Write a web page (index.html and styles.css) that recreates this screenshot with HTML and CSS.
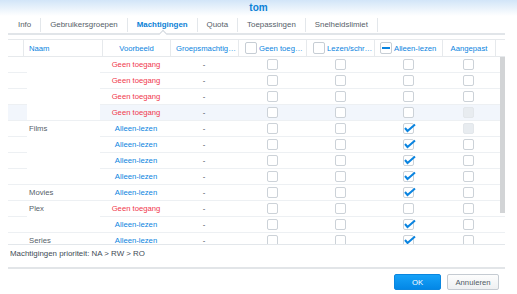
FILE: index.html
```html
<!DOCTYPE html>
<html lang="nl">
<head>
<meta charset="utf-8">
<title>tom</title>
<link rel="stylesheet" href="styles.css">
</head>
<body>
<div class="dialog">
  <div class="titlebar">tom</div>
  <div class="content">
    <div class="tabs">
      <div class="tab"><span class="tab-label">Info</span></div>
      <div class="tab"><span class="tab-label">Gebruikersgroepen</span></div>
      <div class="tab active"><span class="tab-label">Machtigingen</span><span class="notch"></span></div>
      <div class="tab"><span class="tab-label">Quota</span></div>
      <div class="tab"><span class="tab-label">Toepassingen</span></div>
      <div class="tab"><span class="tab-label">Snelheidslimiet</span></div>
    </div>

    <div class="ghead">
      <div class="h"></div>
      <div class="h left">Naam</div>
      <div class="h center">Voorbeeld</div>
      <div class="h left">Groepsmachtig…</div>
      <div class="h left"><span class="hcb"></span>Geen toeg…</div>
      <div class="h left"><span class="hcb"></span>Lezen/schr…</div>
      <div class="h left tight"><span class="hcb mixed"></span>Alleen-lezen</div>
      <div class="h center">Aangepast</div>
      <div class="h"></div>
    </div>

    <div class="gbody">
      <div class="rows">
        <!-- row 1 -->
        <div class="c"></div>
        <div class="c name span4"></div>
        <div class="c red">Geen toegang</div>
        <div class="c dash">-</div>
        <div class="c"><span class="cb"></span></div>
        <div class="c"><span class="cb"></span></div>
        <div class="c"><span class="cb"></span></div>
        <div class="c"><span class="cb"></span></div>
        <div class="c"></div>
        <!-- row 2 -->
        <div class="c"></div>
        <div class="c red">Geen toegang</div>
        <div class="c dash">-</div>
        <div class="c"><span class="cb"></span></div>
        <div class="c"><span class="cb"></span></div>
        <div class="c"><span class="cb"></span></div>
        <div class="c"><span class="cb"></span></div>
        <div class="c"></div>
        <!-- row 3 -->
        <div class="c"></div>
        <div class="c red">Geen toegang</div>
        <div class="c dash">-</div>
        <div class="c"><span class="cb"></span></div>
        <div class="c"><span class="cb"></span></div>
        <div class="c"><span class="cb"></span></div>
        <div class="c"><span class="cb"></span></div>
        <div class="c"></div>
        <!-- row 4 (hover) -->
        <div class="c hl"></div>
        <div class="c hl red">Geen toegang</div>
        <div class="c hl dash">-</div>
        <div class="c hl"><span class="cb"></span></div>
        <div class="c hl"><span class="cb"></span></div>
        <div class="c hl"><span class="cb"></span></div>
        <div class="c hl"><span class="cb dis"></span></div>
        <div class="c hl"></div>
        <!-- row 5 Films -->
        <div class="c"></div>
        <div class="c name span4">Films</div>
        <div class="c blue">Alleen-lezen</div>
        <div class="c dash">-</div>
        <div class="c"><span class="cb"></span></div>
        <div class="c"><span class="cb"></span></div>
        <div class="c"><span class="cb"><svg class="tick" width="9" height="9"><path d="M1 4 L3.5 7 L11 0.5"/></svg></span></div>
        <div class="c"><span class="cb dis"></span></div>
        <div class="c"></div>
        <!-- row 6 -->
        <div class="c"></div>
        <div class="c blue">Alleen-lezen</div>
        <div class="c dash">-</div>
        <div class="c"><span class="cb"></span></div>
        <div class="c"><span class="cb"></span></div>
        <div class="c"><span class="cb"><svg class="tick" width="9" height="9"><path d="M1 4 L3.5 7 L11 0.5"/></svg></span></div>
        <div class="c"><span class="cb"></span></div>
        <div class="c"></div>
        <!-- row 7 -->
        <div class="c"></div>
        <div class="c blue">Alleen-lezen</div>
        <div class="c dash">-</div>
        <div class="c"><span class="cb"></span></div>
        <div class="c"><span class="cb"></span></div>
        <div class="c"><span class="cb"><svg class="tick" width="9" height="9"><path d="M1 4 L3.5 7 L11 0.5"/></svg></span></div>
        <div class="c"><span class="cb"></span></div>
        <div class="c"></div>
        <!-- row 8 -->
        <div class="c"></div>
        <div class="c blue">Alleen-lezen</div>
        <div class="c dash">-</div>
        <div class="c"><span class="cb"></span></div>
        <div class="c"><span class="cb"></span></div>
        <div class="c"><span class="cb"><svg class="tick" width="9" height="9"><path d="M1 4 L3.5 7 L11 0.5"/></svg></span></div>
        <div class="c"><span class="cb"></span></div>
        <div class="c"></div>
        <!-- row 9 Movies -->
        <div class="c"></div>
        <div class="c name">Movies</div>
        <div class="c blue">Alleen-lezen</div>
        <div class="c dash">-</div>
        <div class="c"><span class="cb"></span></div>
        <div class="c"><span class="cb"></span></div>
        <div class="c"><span class="cb"><svg class="tick" width="9" height="9"><path d="M1 4 L3.5 7 L11 0.5"/></svg></span></div>
        <div class="c"><span class="cb"></span></div>
        <div class="c"></div>
        <!-- row 10 Plex -->
        <div class="c"></div>
        <div class="c name span2">Plex</div>
        <div class="c red">Geen toegang</div>
        <div class="c dash">-</div>
        <div class="c"><span class="cb"></span></div>
        <div class="c"><span class="cb"></span></div>
        <div class="c"><span class="cb"></span></div>
        <div class="c"><span class="cb"></span></div>
        <div class="c"></div>
        <!-- row 11 -->
        <div class="c"></div>
        <div class="c blue">Alleen-lezen</div>
        <div class="c dash">-</div>
        <div class="c"><span class="cb"></span></div>
        <div class="c"><span class="cb"></span></div>
        <div class="c"><span class="cb"><svg class="tick" width="9" height="9"><path d="M1 4 L3.5 7 L11 0.5"/></svg></span></div>
        <div class="c"><span class="cb"></span></div>
        <div class="c"></div>
        <!-- row 12 Series -->
        <div class="c"></div>
        <div class="c name">Series</div>
        <div class="c blue">Alleen-lezen</div>
        <div class="c dash">-</div>
        <div class="c"><span class="cb"></span></div>
        <div class="c"><span class="cb"></span></div>
        <div class="c"><span class="cb"><svg class="tick" width="9" height="9"><path d="M1 4 L3.5 7 L11 0.5"/></svg></span></div>
        <div class="c"><span class="cb"></span></div>
        <div class="c"></div>
      </div>
      <div class="thumb"></div>
    </div>

    <div class="note">Machtigingen prioriteit: NA &gt; RW &gt; RO</div>
    <div class="sep"></div>
    <div class="actions">
      <button class="btn ok">OK</button>
      <button class="btn cancel">Annuleren</button>
    </div>
  </div>
</div>
</body>
</html>
```

FILE: styles.css
```css
html, body {
  margin: 0;
  padding: 0;
  background: #ffffff;
}

body {
  font-family: "Liberation Sans", Arial, sans-serif;
  font-size: 7.7px;
  color: #414b55;
}

.dialog {
  width: 517px;
  height: 294px;
  overflow: hidden;
}

.titlebar {
  height: 16px;
  line-height: 16px;
  text-align: center;
  font-weight: bold;
  font-size: 10px;
  color: #0a7fd6;
  background: linear-gradient(#d2e5f8, #ffffff);
}

.content {
  padding: 0 12px 0 8px;
}

/* Tabs */
.tabs {
  display: flex;
  height: 17px;
  padding-left: 1px;
  border-bottom: 2px solid #e1e5e9;
  font-size: 7.9px;
}

.tab {
  position: relative;
  padding: 2px 0 1px;
  color: #555e68;
}

.tab-label {
  display: block;
  height: 14px;
  line-height: 14px;
  padding: 0 9px;
  border-right: 1px solid #e3e7eb;
}

.tab.active {
  color: #0a7fd6;
  font-weight: bold;
}

.notch {
  position: absolute;
  left: calc(50% - 3px);
  bottom: -4px;
  width: 5px;
  height: 5px;
  background: #ffffff;
  border-top: 1px solid #d3d9df;
  border-left: 1px solid #d3d9df;
  transform: rotate(45deg);
}

/* Grid header */
.ghead {
  margin-top: 4px;
  display: grid;
  grid-template-columns: 15px 79px 68px 68px 68px 68px 68px 53px 10px;
  height: 16px;
  border-top: 1px solid #e6e9ec;
  border-bottom: 1px solid #e6e9ec;
}

.h {
  display: flex;
  align-items: center;
  white-space: nowrap;
  overflow: hidden;
  color: #0a84e0;
  border-left: 1px solid #e6e9ec;
}

.h:first-child {
  border-left: none;
}

.h.left {
  padding-left: 5px;
}

.h.center {
  justify-content: center;
}

.h.tight {
  padding-left: 4px;
}

.hcb {
  position: relative;
  display: inline-block;
  box-sizing: border-box;
  width: 12px;
  height: 12px;
  margin-left: 1px;
  margin-right: 2px;
  border: 1px solid #c6cdd4;
  border-radius: 2px;
  background: #ffffff;
  flex: none;
}

.hcb.mixed::after {
  content: "";
  position: absolute;
  left: 1px;
  top: 4px;
  width: 8px;
  height: 2px;
  background: #0a84e0;
}

/* Grid body */
.gbody {
  position: relative;
  height: 187px;
  overflow: hidden;
  border-bottom: 1px solid #e3e7eb;
}

.rows {
  display: grid;
  grid-template-columns: 19px 73px 70px 68px 68px 68px 68px 53px 10px;
  grid-auto-rows: 16px;
}

.c {
  display: flex;
  align-items: center;
  justify-content: center;
  border-bottom: 1px solid #edf0f3;
  white-space: nowrap;
}

.c.hl {
  background: #f2f6fc;
}

.c.name {
  justify-content: flex-start;
  align-items: flex-start;
  line-height: 15px;
  padding-left: 2px;
  color: #555e68;
}

.span4 { grid-row: span 4; }
.span2 { grid-row: span 2; }

.red {
  color: #f0384c;
  padding-left: 2px;
}

.blue {
  color: #0a84e0;
  padding-left: 2px;
}

.dash {
  color: #414b55;
}

.cb {
  position: relative;
  display: block;
  box-sizing: border-box;
  width: 11px;
  height: 11px;
  border: 1px solid #ccd2d8;
  border-radius: 2px;
  background: #ffffff;
}

.cb.dis {
  background: #e8ecf0;
  border-color: #e3e7eb;
}

.tick {
  position: absolute;
  left: 0;
  top: 0;
  overflow: visible;
}

.tick path {
  fill: none;
  stroke: #0a84e0;
  stroke-width: 2;
}

.thumb {
  position: absolute;
  right: 0;
  top: 0;
  width: 5px;
  height: 156px;
  background: #d2d4d6;
}

/* Footer */
.note {
  height: 17px;
  line-height: 17px;
  padding-left: 2px;
  color: #414b55;
  font-size: 7.9px;
}

.sep {
  margin-top: 5px;
  border-top: 2px solid #e2e5e8;
}

.actions {
  display: flex;
  justify-content: flex-end;
  gap: 6px;
  padding-top: 5px;
  padding-right: 6px;
}

.btn {
  box-sizing: border-box;
  height: 16px;
  padding: 0;
  border-radius: 2px;
  font-family: "Liberation Sans", Arial, sans-serif;
  font-size: 7.7px;
}

.btn.ok {
  width: 47px;
  border: 1px solid #0a86df;
  background: linear-gradient(#16a2f8, #0387e6);
  color: #ffffff;
}

.btn.cancel {
  width: 52px;
  border: 1px solid #c5cbd2;
  background: linear-gradient(#fdfdfd, #eef0f2);
  color: #505a64;
}
```
